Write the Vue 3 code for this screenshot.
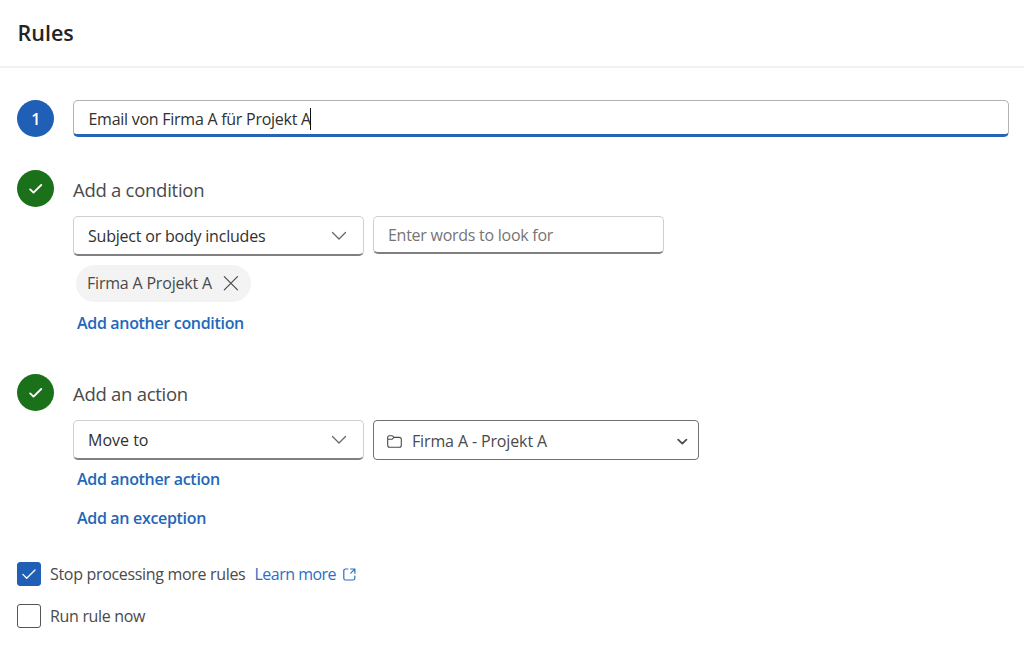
<template>
  <main class="rules">
    <header class="header">
      <h1>Rules</h1>
    </header>

    <section class="step step-name">
      <div class="badge">1</div>
      <div class="name-input">
        <span class="name-text">{{ ruleName }}</span><span class="caret"></span>
      </div>
    </section>

    <section class="step step-condition">
      <div class="badge done">
        <svg width="14" height="12" viewBox="0 0 14 12"><path d="M1.2 6.4 4.5 9.6 12.2 2" /></svg>
      </div>
      <div class="body">
        <h2>Add a condition</h2>
        <div class="fields">
          <div class="select">
            <span class="t-subject">{{ condition }}</span>
            <svg class="chevron" width="16" height="10" viewBox="0 0 16 10"><path d="M1.5 1.5 8 8 14.5 1.5" /></svg>
          </div>
          <input v-model="words" class="words" placeholder="Enter words to look for" />
        </div>
        <div v-for="chip in chips" :key="chip" class="chip">
          <span>{{ chip }}</span>
          <svg class="close" width="16" height="16" viewBox="0 0 16 16" @click="removeChip(chip)">
            <path d="M1.3 1.6 14.5 14.8M14.5 1.6 1.3 14.8" />
          </svg>
        </div>
        <a class="link t-another-condition">Add another condition</a>
      </div>
    </section>

    <section class="step step-action">
      <div class="badge done">
        <svg width="14" height="12" viewBox="0 0 14 12"><path d="M1.2 6.4 4.5 9.6 12.2 2" /></svg>
      </div>
      <div class="body">
        <h2>Add an action</h2>
        <div class="fields">
          <div class="select">
            <span>{{ action }}</span>
            <svg class="chevron" width="16" height="10" viewBox="0 0 16 10"><path d="M1.5 1.5 8 8 14.5 1.5" /></svg>
          </div>
          <div class="folder">
            <svg class="folder-icon" width="15" height="13" viewBox="0 0 15 13">
              <path d="M.7 3V2.2Q.7.7 2.2.7h2.6q.6 0 1 .4l1.3 1.3h5.2q2 0 2 2v5.8q0 2-2 2H2.7q-2 0-2-2zM.7 4.3h3.8q.6 0 1-.4L7 2.4" />
            </svg>
            <span class="t-folder">{{ folder }}</span>
            <svg class="folder-chevron" width="11" height="7" viewBox="0 0 11 7"><path d="M1.2 1.7 5.3 5.7 9.4 1.7" /></svg>
          </div>
        </div>
        <a class="link t-another-action">Add another action</a>
        <a class="link t-exception">Add an exception</a>
      </div>
    </section>

    <section class="options">
      <div class="option" @click="stopProcessing = !stopProcessing">
        <span class="checkbox" :class="{ checked: stopProcessing }">
          <svg v-if="stopProcessing" width="14" height="11" viewBox="0 0 14 11"><path d="M.9 5.4 4.7 9.2 13 1" /></svg>
        </span>
        <span class="option-text">Stop processing more rules</span>
        <a class="learn" @click.stop>Learn more</a>
        <svg class="external" width="13" height="13" viewBox="0 0 13 13">
          <path d="M4.8 1H2.6Q.8 1 .8 2.8v7.4q0 1.8 1.8 1.8H10q1.8 0 1.8-1.8V8.1M7.6 1h4.3v4.3M11.8 1.1 7.8 5.1" />
        </svg>
      </div>
      <div class="option" @click="runNow = !runNow">
        <span class="checkbox" :class="{ checked: runNow }">
          <svg v-if="runNow" width="14" height="11" viewBox="0 0 14 11"><path d="M.9 5.4 4.7 9.2 13 1" /></svg>
        </span>
        <span class="option-text">Run rule now</span>
      </div>
    </section>
  </main>
</template>

<script setup>
import { ref } from 'vue';

const ruleName = ref('Email von Firma A für Projekt A');
const condition = ref('Subject or body includes');
const words = ref('');
const chips = ref(['Firma A Projekt A']);
const action = ref('Move to');
const folder = ref('Firma A - Projekt A');
const stopProcessing = ref(true);
const runNow = ref(false);

function removeChip(chip) {
  chips.value = chips.value.filter(c => c !== chip);
}
</script>

<style>
body {
  margin: 0;
  background: #fff;
}
</style>

<style scoped>
.rules {
  box-sizing: border-box;
  height: 647px;
  overflow: hidden;
  background: #fff;
  color: #4a4a4a;
  font-family: "Open Sans", "Noto Sans", sans-serif;
  font-size: 16px;
  line-height: 22px;
  white-space: nowrap;
}

.rules * {
  box-sizing: border-box;
}

svg {
  flex: none;
  fill: none;
  stroke: currentColor;
  stroke-linecap: round;
  stroke-linejoin: round;
}

.header {
  display: flex;
  align-items: center;
  height: 68px;
  padding: 0 17.5px;
  border-bottom: 2px solid #f2f2f2;
}

h1 {
  margin: 0;
  color: #242424;
  font-size: 21.5px;
  font-weight: 600;
  line-height: 30px;
}

.step {
  display: flex;
  gap: 18.6px;
  padding: 0 15px 0 17.4px;
}

.step-name {
  margin-top: 32px;
  height: 70px;
}

.step-condition {
  height: 204px;
}

.step-action {
  height: 188px;
}

.badge {
  display: flex;
  flex: none;
  align-items: center;
  justify-content: center;
  width: 37px;
  height: 37px;
  padding-top: 1px;
  border-radius: 50%;
  background: #1f5fb5;
  color: #fff;
  font-weight: 600;
}

.badge.done {
  padding-top: 0;
  background: #1a711a;
}

.badge svg {
  stroke-width: 1.9;
}

.name-input {
  display: flex;
  flex: 1;
  align-items: center;
  height: 37px;
  padding: 2px 0 0 14.5px;
  border: 1px solid #b3b3b3;
  border-bottom: 3px solid #2763b8;
  border-radius: 5px;
  color: #303030;
  letter-spacing: -0.26px;
}

.caret {
  width: 1px;
  height: 22px;
  margin-left: -0.5px;
  background: #111;
}

.body {
  display: flex;
  flex-direction: column;
  align-items: flex-start;
}

h2 {
  margin: 7px 0 13px;
  height: 26px;
  font-size: 18.5px;
  font-weight: 400;
  line-height: 26px;
  letter-spacing: -0.27px;
}

.fields {
  display: flex;
  gap: 9px;
  align-items: flex-start;
}

.select {
  display: flex;
  align-items: center;
  justify-content: space-between;
  width: 291px;
  height: 40px;
  padding: 0 15.5px 0 14px;
  border: 1px solid #cfcfcf;
  border-bottom: 2px solid #808080;
  border-radius: 5px;
  color: #303030;
}

.t-subject {
  letter-spacing: -0.21px;
}

.chevron {
  color: #666;
  stroke-width: 1.3;
}

.words {
  width: 291px;
  height: 38px;
  padding: 0 14px;
  border: 1px solid #cfcfcf;
  border-bottom: 2px solid #808080;
  border-radius: 5px;
  outline: none;
  font: inherit;
  letter-spacing: -0.26px;
}

.words::placeholder {
  color: #757575;
}

.chip {
  display: flex;
  align-items: center;
  justify-content: space-between;
  width: 175px;
  height: 37px;
  margin: 9px 0 0 3px;
  padding: 0 12px 1px 11px;
  border-radius: 19px;
  background: #f3f3f3;
  letter-spacing: -0.19px;
}

.close {
  stroke-width: 1.2;
}

.link {
  margin-left: 4px;
  color: #2367b8;
  font-weight: 600;
  letter-spacing: -0.32px;
}

.t-another-condition {
  margin-top: 10px;
}

.t-another-action {
  margin-top: 8px;
}

.t-exception {
  margin-top: 17px;
}

.folder {
  display: flex;
  align-items: center;
  width: 326px;
  height: 40px;
  padding: 2px 10px 0 13px;
  border: 1px solid #707070;
  border-radius: 4px;
}

.folder-icon {
  margin-right: 10px;
  stroke-width: 1.1;
}

.t-folder {
  letter-spacing: -0.13px;
}

.folder-chevron {
  margin-left: auto;
  stroke-width: 1.7;
}

.options {
  display: flex;
  flex-direction: column;
  gap: 17.5px;
  padding-left: 17px;
}

.option {
  display: flex;
  align-items: center;
  height: 24px;
}

.option-text {
  letter-spacing: -0.32px;
}

.checkbox {
  display: flex;
  flex: none;
  align-items: center;
  justify-content: center;
  width: 24px;
  height: 24px;
  margin-right: 9px;
  border: 1px solid #555;
  border-radius: 3px;
}

.checkbox.checked {
  border-color: #1f5fb5;
  background: #1f5fb5;
  color: #fff;
}

.checkbox svg {
  stroke-width: 1.3;
}

.learn {
  margin-left: 9px;
  color: #2b6fc4;
  letter-spacing: -0.5px;
}

.external {
  margin: 1px 0 0 7px;
  color: #2b6fc4;
  stroke-width: 1.2;
}
</style>
